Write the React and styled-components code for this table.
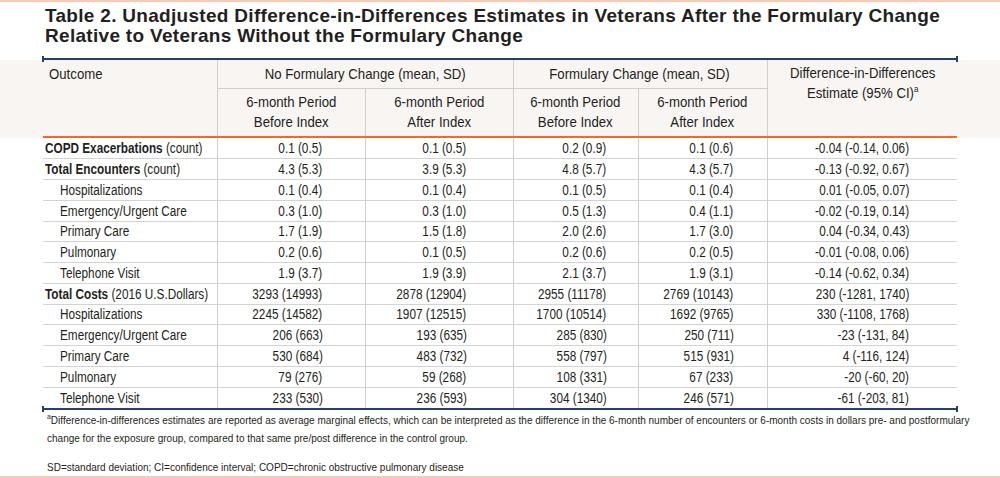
import React from 'react';
import styled, { createGlobalStyle } from 'styled-components';

const GlobalStyle = createGlobalStyle`
  body {
    margin: 0;
    background: #ffffff;
  }
`;

const SANS = `"Liberation Sans", Arial, sans-serif`;

const Page = styled.div`
  width: 1000px;
  height: 478px;
  box-sizing: border-box;
  border-top: 2px solid #fac9b2;
  border-bottom: 2px solid #fac9b2;
  background: #ffffff;
  color: #231f20;
  overflow: hidden;
`;

const Title = styled.h1`
  margin: 0;
  padding: 4px 0 0 45px;
  height: 56px;
  box-sizing: border-box;
  font-family: ${SANS};
  font-weight: 700;
  font-size: 19px;
  letter-spacing: 0.3px;
  line-height: 19.5px;
  color: #231f20;
`;

const Rule = styled.div`
  position: relative;
  margin-left: 42px;
  width: 916px;
  height: 2px;
  background: #25406b;
  &::before,
  &::after {
    content: '';
    position: absolute;
    top: -2px;
    width: 2px;
    height: 6px;
    background: #25406b;
  }
  &::before {
    left: 0;
  }
  &::after {
    right: 0;
  }
`;

/* the source font is a narrow grotesque; squeeze the Liberation glyphs to match */
const Squeeze = styled.span`
  display: inline-block;
  white-space: nowrap;
  transform: scaleX(${(p) => p.$k || 0.85});
  transform-origin: ${(p) => p.$origin || 'left'} center;
`;

const Band = styled.div`
  background: #f8f5f3;
`;

const Table = styled.table`
  margin-left: 43px;
  width: 914px;
  border-collapse: collapse;
  table-layout: fixed;
  font-family: ${SANS};
  color: #231f20;
`;

const HeadCell = styled.th`
  font-weight: 400;
  font-size: 15px;
  line-height: 20px;
  text-align: ${(p) => (p.$left ? 'left' : 'center')};
  vertical-align: ${(p) => (p.$top ? 'top' : 'middle')};
  padding: ${(p) => (p.$left ? '0 0 0 6px' : p.$top ? '3px 0 0' : '0')};
  border-left: ${(p) => (p.$noLeft ? 'none' : '1.5px solid #cfcfcf')};
  border-bottom: ${(p) => (p.$rule ? '1.5px solid #cfcfcf' : 'none')};
  height: ${(p) => p.$h}px;
  box-sizing: border-box;
  sup {
    font-size: 9px;
    line-height: 0;
  }
`;

const HeadBottom = styled.tr`
  border-bottom: 2px solid #ef6b2d;
`;

const Row = styled.tr`
  height: 20.75px;
  border-bottom: ${(p) => (p.$last ? 'none' : '1.5px solid #d3d3d3')};
`;

const Label = styled.td`
  font-size: 14px;
  line-height: 18px;
  padding: 0 0 0 ${(p) => (p.$indent ? 17 : 2)}px;
  white-space: nowrap;
  b {
    font-weight: 700;
  }
`;

const Value = styled.td`
  font-size: 14px;
  line-height: 18px;
  text-align: right;
  padding: 0 ${(p) => p.$pr}px 0 0;
  border-left: 1.5px solid #cfcfcf;
  white-space: nowrap;
`;

const Notes = styled.div`
  padding: 1px 0 0 47px;
  font-family: ${SANS};
  font-size: 11.5px;
  line-height: 18px;
  color: #231f20;
  p {
    margin: 0;
  }
  p + p {
    margin-top: 11px;
  }
  sup {
    font-size: 8px;
    line-height: 0;
  }
`;

const columns = [
  { w: 174 },
  { w: 148, pr: 42 },
  { w: 148, pr: 46 },
  { w: 125, pr: 31 },
  { w: 129, pr: 33 },
  { w: 190, pr: 48 },
];

const rows = [
  { bold: 'COPD Exacerbations', rest: ' (count)', v: ['0.1 (0.5)', '0.1 (0.5)', '0.2 (0.9)', '0.1 (0.6)', '-0.04 (-0.14, 0.06)'] },
  { bold: 'Total Encounters', rest: ' (count)', v: ['4.3 (5.3)', '3.9 (5.3)', '4.8 (5.7)', '4.3 (5.7)', '-0.13 (-0.92, 0.67)'] },
  { label: 'Hospitalizations', v: ['0.1 (0.4)', '0.1 (0.4)', '0.1 (0.5)', '0.1 (0.4)', '0.01 (-0.05, 0.07)'] },
  { label: 'Emergency/Urgent Care', v: ['0.3 (1.0)', '0.3 (1.0)', '0.5 (1.3)', '0.4 (1.1)', '-0.02 (-0.19, 0.14)'] },
  { label: 'Primary Care', v: ['1.7 (1.9)', '1.5 (1.8)', '2.0 (2.6)', '1.7 (3.0)', '0.04 (-0.34, 0.43)'] },
  { label: 'Pulmonary', v: ['0.2 (0.6)', '0.1 (0.5)', '0.2 (0.6)', '0.2 (0.5)', '-0.01 (-0.08, 0.06)'] },
  { label: 'Telephone Visit', v: ['1.9 (3.7)', '1.9 (3.9)', '2.1 (3.7)', '1.9 (3.1)', '-0.14 (-0.62, 0.34)'] },
  { bold: 'Total Costs', rest: ' (2016 U.S.Dollars)', v: ['3293 (14993)', '2878 (12904)', '2955 (11178)', '2769 (10143)', '230 (-1281, 1740)'] },
  { label: 'Hospitalizations', v: ['2245 (14582)', '1907 (12515)', '1700 (10514)', '1692 (9765)', '330 (-1108, 1768)'] },
  { label: 'Emergency/Urgent Care', v: ['206 (663)', '193 (635)', '285 (830)', '250 (711)', '-23 (-131, 84)'] },
  { label: 'Primary Care', v: ['530 (684)', '483 (732)', '558 (797)', '515 (931)', '4 (-116, 124)'] },
  { label: 'Pulmonary', v: ['79 (276)', '59 (268)', '108 (331)', '67 (233)', '-20 (-60, 20)'] },
  { label: 'Telephone Visit', v: ['233 (530)', '236 (593)', '304 (1340)', '246 (571)', '-61 (-203, 81)'] },
];

const Cols = () => (
  <colgroup>
    {columns.map((c, i) => (
      <col key={i} style={{ width: c.w }} />
    ))}
  </colgroup>
);

const Period = ({ when }) => (
  <Squeeze $k={0.88} $origin="center">
    6-month Period
    <br />
    {when}
  </Squeeze>
);

export default function App() {
  return (
    <Page>
      <GlobalStyle />
      <Title>
        Table 2. Unadjusted Difference-in-Differences Estimates in Veterans After the Formulary Change
        <br />
        Relative to Veterans Without the Formulary Change
      </Title>
      <Rule />
      <Band>
        <Table>
          <Cols />
          <thead>
            <tr>
              <HeadCell $left $noLeft $h={28}>
                <Squeeze $k={0.88}>Outcome</Squeeze>
              </HeadCell>
              <HeadCell colSpan={2} $rule $h={28}>
                <Squeeze $k={0.88} $origin="center">No Formulary Change (mean, SD)</Squeeze>
              </HeadCell>
              <HeadCell colSpan={2} $rule $h={28}>
                <Squeeze $k={0.88} $origin="center">Formulary Change (mean, SD)</Squeeze>
              </HeadCell>
              <HeadCell rowSpan={2} $top $h={77}>
                <Squeeze $k={0.88} $origin="center">
                  Difference-in-Differences
                  <br />
                  Estimate (95% CI)<sup>a</sup>
                </Squeeze>
              </HeadCell>
            </tr>
            <HeadBottom>
              <HeadCell $noLeft $h={49} />
              <HeadCell $h={49}><Period when="Before Index" /></HeadCell>
              <HeadCell $h={49}><Period when="After Index" /></HeadCell>
              <HeadCell $h={49}><Period when="Before Index" /></HeadCell>
              <HeadCell $h={49}><Period when="After Index" /></HeadCell>
            </HeadBottom>
          </thead>
        </Table>
      </Band>
      <Table>
        <Cols />
        <tbody>
          {rows.map((r, i) => (
            <Row key={i} $last={i === rows.length - 1}>
              {r.bold ? (
                <Label>
                  <Squeeze $k={0.84}>
                    <b>{r.bold}</b>
                    {r.rest}
                  </Squeeze>
                </Label>
              ) : (
                <Label $indent>
                  <Squeeze $k={0.84}>{r.label}</Squeeze>
                </Label>
              )}
              {r.v.map((val, j) => (
                <Value key={j} $pr={columns[j + 1].pr}>
                  <Squeeze $k={0.84} $origin="right">{val}</Squeeze>
                </Value>
              ))}
            </Row>
          ))}
        </tbody>
      </Table>
      <Rule />
      <Notes>
        <p>
          <Squeeze $k={0.87}>
            <sup>a</sup>Difference-in-differences estimates are reported as average marginal effects, which can be interpreted as the difference in the 6-month number of encounters or 6-month costs in dollars pre- and postformulary
            <br />
            change for the exposure group, compared to that same pre/post difference in the control group.
          </Squeeze>
        </p>
        <p>
          <Squeeze $k={0.87}>SD=standard deviation; CI=confidence interval; COPD=chronic obstructive pulmonary disease</Squeeze>
        </p>
      </Notes>
    </Page>
  );
}
